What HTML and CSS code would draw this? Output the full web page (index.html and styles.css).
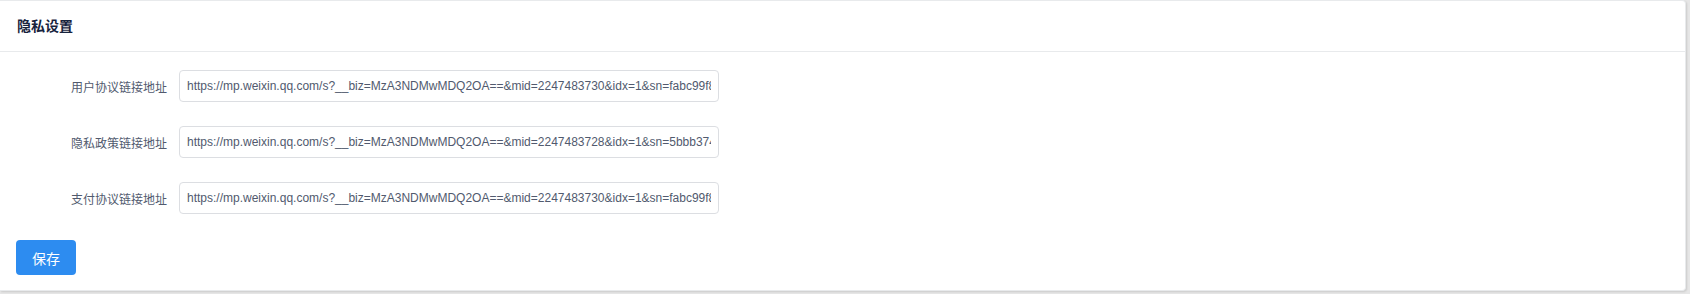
FILE: index.html
```html
<!DOCTYPE html>
<html lang="zh-CN">
<head>
<meta charset="utf-8">
<title>隐私设置</title>
<link rel="stylesheet" href="styles.css">
</head>
<body>
<div class="card">
  <div class="card-head"><p class="card-title">隐私设置</p></div>
  <div class="card-body">
    <form class="form">
      <div class="form-item">
        <label class="form-label">用户协议链接地址</label>
        <input class="input" type="text" value="https://mp.weixin.qq.com/s?__biz=MzA3NDMwMDQ2OA==&amp;mid=2247483730&amp;idx=1&amp;sn=fabc99f8a2d1c3e4b5f6a7b8c9d0e1f2&amp;chksm=1e8d2b4a29faa25c">
      </div>
      <div class="form-item">
        <label class="form-label">隐私政策链接地址</label>
        <input class="input" type="text" value="https://mp.weixin.qq.com/s?__biz=MzA3NDMwMDQ2OA==&amp;mid=2247483728&amp;idx=1&amp;sn=5bbb374e0c1d2a3b4c5d6e7f8a9b0c1d&amp;chksm=1e8d2b4829faa25e">
      </div>
      <div class="form-item">
        <label class="form-label">支付协议链接地址</label>
        <input class="input" type="text" value="https://mp.weixin.qq.com/s?__biz=MzA3NDMwMDQ2OA==&amp;mid=2247483730&amp;idx=1&amp;sn=fabc99f8a2d1c3e4b5f6a7b8c9d0e1f2&amp;chksm=1e8d2b4a29faa25c">
      </div>
      <div class="form-actions">
        <button class="btn-primary" type="button">保存</button>
      </div>
    </form>
  </div>
</div>
</body>
</html>
```
FILE: styles.css
```css
html, body {
  margin: 0;
  padding: 0;
}
body {
  background: #e6e6e6;
  font-family: "Liberation Sans", "Noto Sans CJK SC", sans-serif;
  font-size: 12px;
  color: #515a6e;
  width: 1690px;
  height: 294px;
  overflow: hidden;
}
.card {
  width: 1686px;
  height: 291px;
  box-sizing: border-box;
  background: #fff;
  border: 1px solid #e8eaec;
  border-left: none;
  border-radius: 0 4px 4px 0;
  box-shadow: 1px 1px 2px rgba(0, 0, 0, 0.12);
}
.card-head {
  height: 51px;
  box-sizing: border-box;
  padding: 15px 17px;
  border-bottom: 1px solid #e8eaec;
}
.card-title {
  margin: 0;
  height: 20px;
  line-height: 20px;
  font-size: 14px;
  font-weight: 700;
  color: #17233d;
}
.card-body {
  padding: 18px 16px 14px 16px;
}
.form {
  display: flex;
  flex-direction: column;
  gap: 24px;
}
.form-item {
  display: flex;
  align-items: center;
  height: 32px;
}
.form-label {
  width: 163px;
  box-sizing: border-box;
  padding-right: 12px;
  text-align: right;
  font-size: 12px;
  color: #515a6e;
}
.input {
  width: 540px;
  height: 32px;
  box-sizing: border-box;
  border: 1px solid #dcdee2;
  border-radius: 4px;
  padding: 4px 7px;
  font-family: "Liberation Sans", "Noto Sans CJK SC", sans-serif;
  font-size: 12px;
  color: #515a6e;
  background: #fff;
  outline: none;
}
.form-actions {
  display: flex;
  margin-top: 2px;
}
.btn-primary {
  width: 60px;
  height: 35px;
  border: none;
  border-radius: 4px;
  background: #2d8cf0;
  color: #fff;
  font-family: "Liberation Sans", "Noto Sans CJK SC", sans-serif;
  font-size: 14px;
  padding: 0;
  cursor: pointer;
}
```
